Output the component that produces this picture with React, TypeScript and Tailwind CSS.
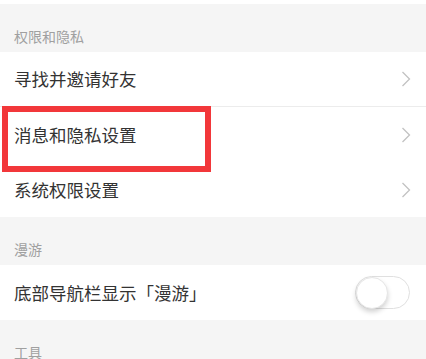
const font = { fontFamily: '"Noto Sans CJK SC", "Noto Sans", sans-serif' }

function SectionHeader({ title }: { title: string }) {
  return (
    <div className="h-[48px] bg-[#f5f5f5] flex items-end pb-[9px] pl-[14px]">
      <span className="text-[14px] leading-none text-[#a0a0a0]">{title}</span>
    </div>
  )
}

function Chevron() {
  return (
    <svg width="10" height="16" viewBox="0 0 10 16" fill="none">
      <polyline points="1.5,1 8.5,8 1.5,15" stroke="#c2c2c2" strokeWidth="1.3" strokeLinejoin="miter" />
    </svg>
  )
}

function LinkRow({ title, divider = false }: { title: string; divider?: boolean }) {
  return (
    <div className={`h-[55px] bg-white flex items-center justify-between pl-[14px] pr-[15px] ${divider ? 'border-b border-[#ececec]' : ''}`}>
      <span className="text-[17.5px] leading-none text-[#333333]">{title}</span>
      <Chevron />
    </div>
  )
}

export default function App() {
  return (
    <div className="relative w-[426px] h-[359px] overflow-hidden bg-[#f5f5f5]" style={font}>
      <div className="h-[4px] bg-white" />
      <SectionHeader title="权限和隐私" />
      <LinkRow title="寻找并邀请好友" divider />
      <LinkRow title="消息和隐私设置" />
      <LinkRow title="系统权限设置" />
      <SectionHeader title="漫游" />
      <div className="h-[55px] bg-white flex items-center justify-between pl-[14px] pr-[16px]">
        <span className="text-[17.5px] leading-none text-[#333333]">底部导航栏显示「漫游」</span>
        <div className="w-[55px] h-[33px] rounded-full border border-[#e0e0e0] bg-white flex items-center">
          <div className="w-[32px] h-[32px] rounded-full bg-white border border-[#e6e6e6] shadow-[0_3px_5px_rgba(0,0,0,0.18)]" />
        </div>
      </div>
      <SectionHeader title="工具" />

      {/* 红色标注框 */}
      <div className="absolute left-[2px] top-[106px] w-[209px] h-[66px] border-[6px] border-[#f2373a] pointer-events-none" />
    </div>
  )
}
